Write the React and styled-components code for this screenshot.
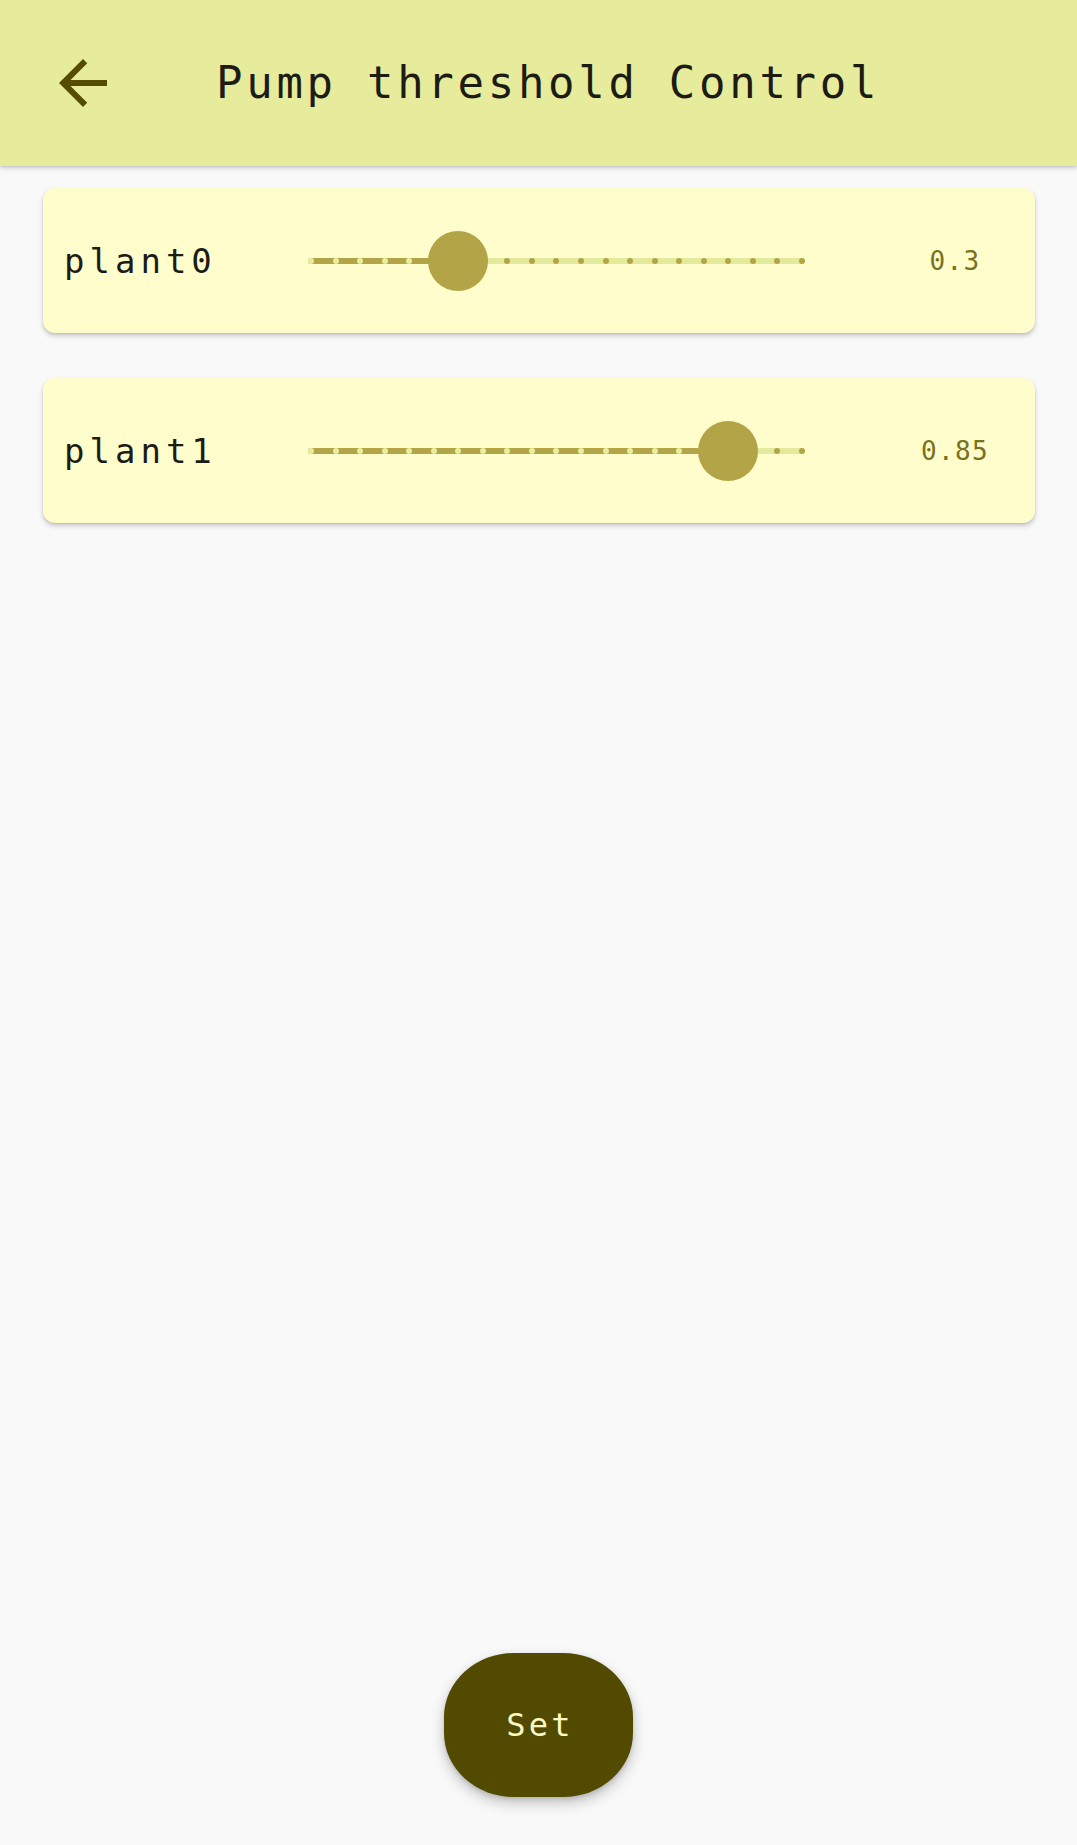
import React from "react";
import styled, { createGlobalStyle } from "styled-components";

const GlobalStyle = createGlobalStyle`
  html, body {
    margin: 0;
    padding: 0;
    background: #f9f9f9;
  }
  body {
    font-family: "DejaVu Sans Mono", "Liberation Mono", monospace;
  }
  * { box-sizing: border-box; }
`;

const Screen = styled.div`
  min-height: 100vh;
  display: flex;
  flex-direction: column;
  background: #f9f9f9;
`;

const TopBar = styled.header`
  position: relative;
  z-index: 1;
  height: 166px;
  flex-shrink: 0;
  display: flex;
  align-items: center;
  gap: 97px;
  padding-left: 47px;
  background: #e6ec9b;
  box-shadow: 0 2px 5px rgba(0, 0, 0, 0.18), 0 1px 2px rgba(0, 0, 0, 0.08);
`;

const BackButton = styled.button`
  width: 72px;
  height: 72px;
  padding: 0;
  border: 0;
  background: transparent;
  display: flex;
  align-items: center;
  justify-content: center;
  cursor: pointer;
`;

const Title = styled.h1`
  margin: 0;
  font-family: "DejaVu Sans Mono", monospace;
  font-weight: 400;
  font-size: 44px;
  line-height: 1;
  letter-spacing: 3.7px;
  color: #1d1c14;
`;

const List = styled.main`
  display: flex;
  flex-direction: column;
  gap: 45px;
  padding: 22px 42px 0 43px;
`;

const Card = styled.section`
  height: 145px;
  display: grid;
  grid-template-columns: 244px 497px 1fr;
  align-items: center;
  padding: 0 20px 0 21px;
  background: #fffdcb;
  border-radius: 12px;
  box-shadow: 0 3px 5px rgba(0, 0, 0, 0.18), 0 1px 2px rgba(0, 0, 0, 0.1);
`;

const Label = styled.span`
  font-size: 34px;
  line-height: 1;
  letter-spacing: 5px;
  color: #1d1c14;
`;

const Value = styled.span`
  justify-self: end;
  width: 120px;
  text-align: center;
  font-size: 26px;
  line-height: 1;
  letter-spacing: 1.3px;
  color: #7a7120;
`;

const Track = styled.div`
  position: relative;
  height: 6px;
  border-radius: 3px;
  background: #e4ea9c;
`;

const Fill = styled.div`
  position: absolute;
  left: 0;
  top: 0;
  bottom: 0;
  border-radius: 3px;
  background: #b3a547;
`;

const Ticks = styled.div`
  position: absolute;
  inset: 0;
  display: flex;
  justify-content: space-between;
  align-items: center;
`;

const Tick = styled.span`
  width: 6px;
  height: 6px;
  border-radius: 50%;
  background: ${(p) => (p.$active ? "#e8ee9f" : "#b3a547")};
`;

const Thumb = styled.div`
  position: absolute;
  top: 50%;
  width: 60px;
  height: 60px;
  margin: -30px 0 0 -30px;
  border-radius: 50%;
  background: #b3a547;
`;

const SetButton = styled.button`
  align-self: center;
  margin: auto 0 48px;
  width: 189px;
  height: 144px;
  border: 0;
  border-radius: 70px / 64px;
  background: #524a00;
  color: #fdf9c4;
  font-family: "DejaVu Sans Mono", monospace;
  font-size: 32px;
  letter-spacing: 3.2px;
  padding: 0 0 0 3px;
  box-shadow: 0 6px 14px rgba(0, 0, 0, 0.22), 0 2px 4px rgba(0, 0, 0, 0.12);
  cursor: pointer;
`;

const TRACK_INNER = 491;

function Slider({ value }) {
  const pos = 3 + value * TRACK_INNER;
  const ticks = Array.from({ length: 21 }, (_, i) => i / 20);
  return (
    <Track>
      <Fill style={{ width: `${pos}px` }} />
      <Ticks>
        {ticks.map((t, i) => (
          <Tick key={i} $active={t <= value + 1e-9} />
        ))}
      </Ticks>
      <Thumb style={{ left: `${pos}px` }} />
    </Track>
  );
}

const plants = [
  { name: "plant0", value: 0.3 },
  { name: "plant1", value: 0.85 },
];

export default function App() {
  return (
    <>
      <GlobalStyle />
      <Screen>
        <TopBar>
          <BackButton aria-label="Back">
            <svg width="72" height="72" viewBox="0 0 24 24">
              <path
                fill="#554c00"
                d="M20 11H7.83l5.59-5.59L12 4l-8 8 8 8 1.41-1.41L7.83 13H20v-2z"
              />
            </svg>
          </BackButton>
          <Title>Pump threshold Control</Title>
        </TopBar>
        <List>
          {plants.map((p) => (
            <Card key={p.name}>
              <Label>{p.name}</Label>
              <Slider value={p.value} />
              <Value>{p.value}</Value>
            </Card>
          ))}
        </List>
        <SetButton>Set</SetButton>
      </Screen>
    </>
  );
}
